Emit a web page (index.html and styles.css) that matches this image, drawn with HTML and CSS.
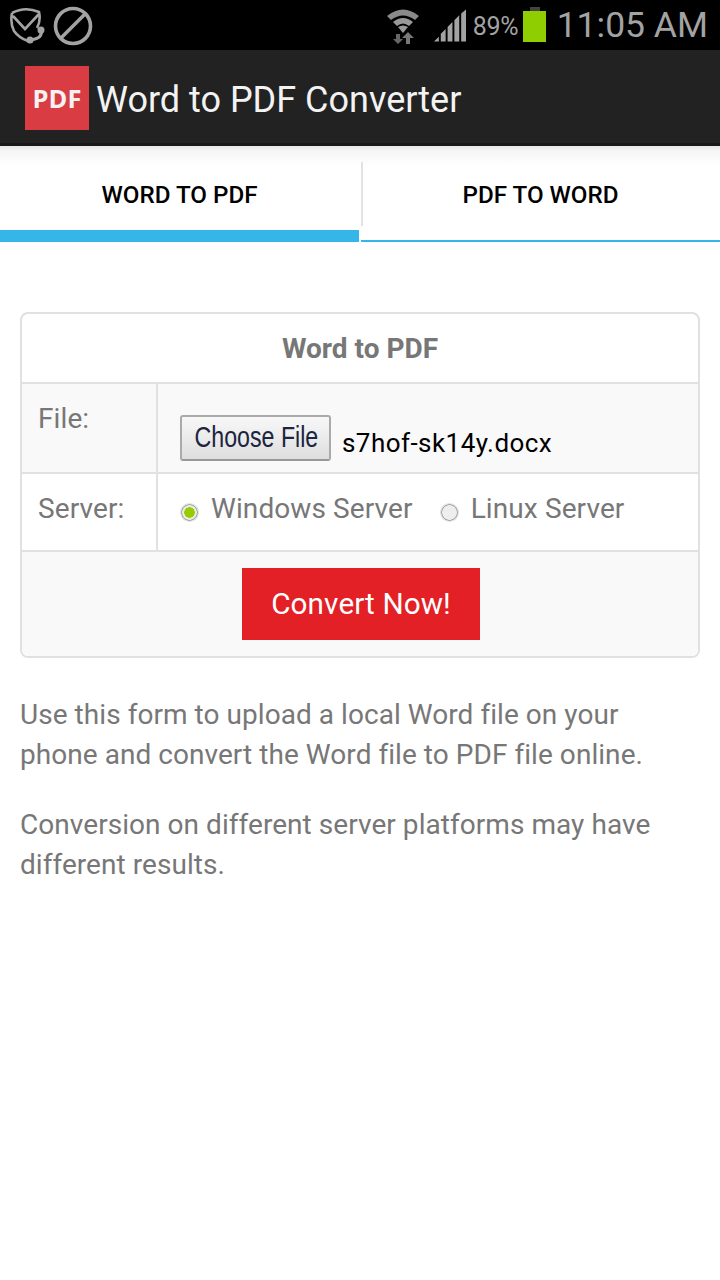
FILE: index.html
```html
<!DOCTYPE html>
<html lang="en">
<head>
<meta charset="utf-8">
<title>Word to PDF Converter</title>
<link rel="stylesheet" href="styles.css">
</head>
<body>
<div class="status">
  <svg class="ic-mail" width="38" height="38" viewBox="0 0 38 38" fill="none" stroke="#a3a3a3" stroke-width="2.6"><path d="M5 7 Q18 0 32 6 Q34 15 30 22 M5 7 Q3 17 7 25 Q12 32 21 35 M6 10 L18 23 L32 8"/><path d="M34 23 Q36 31 28 33 L24 34" stroke-width="3.2"/><circle cx="23" cy="34" r="2.2" fill="#a3a3a3"/><circle cx="34" cy="24" r="2.2" fill="#a3a3a3"/></svg>
  <svg class="ic-block" width="40" height="40" viewBox="0 0 40 40" fill="none" stroke="#a3a3a3" stroke-width="3.6"><circle cx="20" cy="20" r="17.5"/><path d="M32 8 L8 32"/></svg>
  <span class="status-gap"></span>
  <svg class="ic-wifi" width="32" height="36" viewBox="0 0 32 36" fill="#8a8a8a"><path d="M0 8 Q16 -5 32 8 L28 12 Q16 3 4 12 Z"/><path d="M6 14 Q16 6 26 14 L22 18 Q16 13 10 18 Z" fill="#999"/><path d="M11 19 Q16 16 21 19 L16 25 Z" fill="#999"/><path d="M9 26 h4 v5 h3 l-5 5 l-5 -5 h3 Z" fill="#666"/><path d="M19 36 h4 v-6 h4 l-6 -6 l-6 6 h4 Z" fill="#777"/></svg>
  <svg class="ic-signal" width="33" height="34" viewBox="0 0 34 34" fill="#a3a3a3"><path d="M0 33 L5 28 V33 Z M7 33 V25 L12 20 V33 Z M14 33 V18 L19 13 V33 Z M21 33 V11 L26 6 V33 Z M28 33 V4 L33 0 V33 Z"/></svg>
  <span class="pct">89%</span>
  <span class="battery"><span class="batt-cap"></span><span class="batt-body"></span></span>
  <span class="clock">11:05 AM</span>
</div>
<header class="appbar">
  <span class="logo">PDF</span>
  <h1 class="title">Word to PDF Converter</h1>
</header>
<nav class="tabs">
  <div class="tab tab-active"><span>WORD TO PDF</span></div>
  <div class="tab"><span>PDF TO WORD</span></div>
</nav>
<main class="content">
  <table class="form">
    <tr><th colspan="2" class="head">Word to PDF</th></tr>
    <tr class="file-row">
      <td class="label">File:</td>
      <td class="file-cell"><span class="choose"><span class="choose-text">Choose File</span></span><span class="fname">s7hof-sk14y.docx</span></td>
    </tr>
    <tr class="server-row">
      <td class="label">Server:</td>
      <td class="radios">
        <span class="radio radio-on"></span><span class="rlabel">Windows Server</span>
        <span class="radio radio-off"></span><span class="rlabel">Linux Server</span>
      </td>
    </tr>
    <tr class="action-row"><td colspan="2"><span class="convert">Convert Now!</span></td></tr>
  </table>
  <p class="para">Use this form to upload a local Word file on your phone and convert the Word file to PDF file online.</p>
  <p class="para">Conversion on different server platforms may have different results.</p>
</main>
</body>
</html>
```
FILE: styles.css
```css
* { box-sizing: border-box; }
html, body { margin: 0; padding: 0; }
body { width: 720px; height: 1280px; background: #fff; font-family: Roboto, sans-serif; overflow: hidden; }

.status { height: 50px; background: #000; display: flex; align-items: center; padding: 0 12px 0 7px; }
.ic-mail { margin-top: 0; }
.ic-block { margin-left: 8px; margin-top: 1px; }
.status-gap { flex: 1; }
.ic-wifi { margin-top: 2px; margin-right: 15px; }
.ic-signal { margin-top: 2px; margin-right: 6px; }
.pct { color: #a3a3a3; font-size: 25px; width: 46px; margin-right: 4px; margin-top: 3px; letter-spacing: -0.3px; }
.battery { display: flex; flex-direction: column; align-items: center; width: 24px; margin-top: -1px; margin-right: 10px; }
.batt-cap { width: 10px; height: 4px; background: #444; }
.batt-body { width: 23px; height: 31px; background: #8fce00; }
.clock { color: #a3a3a3; font-size: 35.5px; white-space: nowrap; }

.appbar { height: 96px; background: #222; display: flex; align-items: center; padding: 0 0 0 25px; border-bottom: 3px solid #181818; }
.logo { width: 64px; height: 64px; background: #d93c42; color: #f6f2f2; font: 700 25.5px/64px "Open Sans", sans-serif; text-align: center; margin-top: 3px; }
.title { margin: 7px 0 0 7px; font-weight: 400; font-size: 36px; color: #f3f3f3; }

.tabs { height: 96px; display: flex; background: linear-gradient(#e6e6e6 0, #f6f6f6 5px, #fff 20px); }
.tab { flex: 1; display: flex; justify-content: center; align-items: center; font-size: 24.2px; font-weight: 500; color: #000; border-bottom: 2px solid #35b5e8; margin-left: 2px; position: relative; }
.tab span { position: relative; top: 2px; }
.tab-active { flex: none; width: 359px; margin-left: 0; border-bottom: 12px solid #35b5e8; }
.tab-active span { top: 7px; }
.tab-active::after { content: ""; position: absolute; right: -4px; top: 16px; height: 64px; width: 2px; background: #e2e2e2; }

.content { padding: 70px 20px 0; }
.form { width: 680px; border-collapse: separate; border-spacing: 0; border: 2px solid #e1e1e1; border-radius: 8px; color: #777; font-size: 28px; letter-spacing: 0.1px; }
.form td, .form th { padding: 0; }
.head { height: 68px; font-size: 28px; font-weight: 700; text-align: center; color: #777; letter-spacing: 0; }
.label { width: 134px; padding-left: 16px !important; border-top: 2px solid #e1e1e1; background: #f9f9f9; vertical-align: top; }
.file-row .label { padding-top: 18px !important; height: 90px; }
.server-row .label { background: #fff; padding-top: 18px !important; height: 78px; }
.file-cell, .radios { border-top: 2px solid #e1e1e1; border-left: 2px solid #e1e1e1; }
.file-cell { background: #f9f9f9; padding: 31px 0 0 22px !important; color: #000; vertical-align: top; white-space: nowrap; }
.choose { display: inline-block; width: 151px; height: 46px; border: 2px solid #aaa; border-bottom-color: #999; border-radius: 3px; background: linear-gradient(#f8f8f8, #dedede); font: 29px/40px "Liberation Sans", sans-serif; color: #1c2440; text-align: center; letter-spacing: 0; vertical-align: top; }
.choose-text { display: inline-block; transform: translateX(-3px) scaleX(0.8); }
.fname { display: inline-block; margin-left: 11px; font-size: 26px; line-height: 30px; padding-top: 13px; vertical-align: top; letter-spacing: 0.45px; }
.radios { padding: 18px 0 0 22px !important; vertical-align: top; white-space: nowrap; }
.radio { display: inline-block; width: 19px; height: 19px; border-radius: 50%; vertical-align: -4px; }
.radio-on { background: radial-gradient(circle, #9c0 0 5px, #e8eee0 5.5px 7px, #aaa 7.5px 8px, #e2e2e2 8.5px); }
.radio-off { background: radial-gradient(circle, #eee 0 7px, #aaa 7.5px 8px, #e2e2e2 8.5px); margin-left: 20px; }
.rlabel { margin-left: 12px; }
.action-row td { height: 106px; border-top: 2px solid #e1e1e1; background: #f9f9f9; text-align: center; padding-left: 2px; border-radius: 0 0 6px 6px; }
.convert { display: inline-block; width: 238px; height: 72px; background: #e22025; color: #fff; font-size: 29.7px; line-height: 72px; }
.para { margin: 0 0 30px; color: #777; font-size: 28px; line-height: 40px; letter-spacing: 0.05px; }
.form + .para { margin-top: 37px; }
```
